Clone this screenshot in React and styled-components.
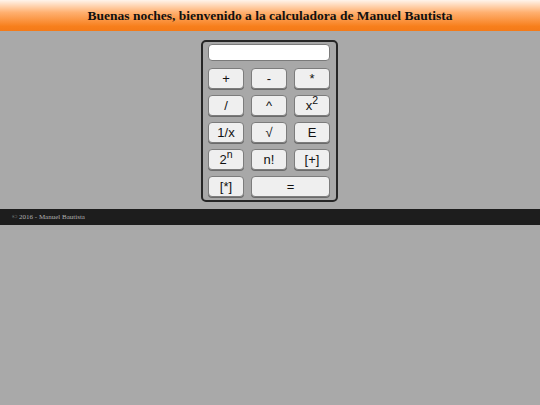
import React from 'react';
import styled, { createGlobalStyle } from 'styled-components';

const GlobalStyle = createGlobalStyle`
  html, body {
    margin: 0;
    padding: 0;
    background: #a9a9a9;
    height: 100%;
  }
  body {
    font-family: "Liberation Serif", serif;
  }
`;

const Header = styled.header`
  height: 31px;
  display: flex;
  align-items: center;
  justify-content: center;
  background: linear-gradient(to bottom, #fff4ec 0%, #ffb070 40%, #f77f1c 85%, #f47a18 100%);
  h1 {
    margin: 0;
    font-size: 13.5px;
    font-weight: bold;
    color: #111;
  }
`;

const Main = styled.main`
  display: flex;
  justify-content: center;
  padding: 9px 1px 7px 0;
`;

const Calculator = styled.div`
  border: 2px solid #262626;
  border-radius: 5px;
  background: #a8a8a8;
  padding: 2px 6px 3px 5px;
  width: 122px;
`;

const Display = styled.input`
  display: block;
  width: 122px;
  height: 17px;
  box-sizing: border-box;
  border: 1px solid #7a7a7a;
  border-radius: 4px;
  background: #fff;
  margin: 0 0 7px;
  padding: 0 4px;
  font-family: "Liberation Sans", sans-serif;
  font-size: 12px;
  outline: none;
`;

const Keys = styled.div`
  display: grid;
  grid-template-columns: repeat(3, 36px);
  grid-auto-rows: 21px;
  column-gap: 7px;
  row-gap: 6px;
`;

const Key = styled.button`
  grid-column: span ${(p) => p.$span || 1};
  margin: 0;
  padding: 0;
  border: 1px solid #7c7c7c;
  border-radius: 4px;
  background: #efefef;
  box-shadow: 0 1px 0 #6a6a6a;
  font-family: "Liberation Sans", sans-serif;
  font-size: 13px;
  color: #111;
  line-height: 1;
  cursor: pointer;
  sup {
    font-size: 10.5px;
    line-height: 0;
    vertical-align: 6px;
  }
`;

const Footer = styled.footer`
  height: 16px;
  background: #1d1d1d;
  display: flex;
  align-items: center;
  padding-left: 12px;
  color: #b0b0b0;
  font-size: 7px;
`;

const keys = [
  ['+'], ['-'], ['*'],
  ['/'], ['^'], [<>x<sup>2</sup></>],
  ['1/x'], ['√'], ['E'],
  [<>2<sup>n</sup></>], ['n!'], ['[+]'],
  ['[*]'], ['=', 2],
];

export default function App() {
  return (
    <>
      <GlobalStyle />
      <Header>
        <h1>Buenas noches, bienvenido a la calculadora de Manuel Bautista</h1>
      </Header>
      <Main>
        <Calculator>
          <Display type="text" readOnly />
          <Keys>
            {keys.map(([label, span], i) => (
              <Key key={i} $span={span}>{label}</Key>
            ))}
          </Keys>
        </Calculator>
      </Main>
      <Footer>© 2016 - Manuel Bautista</Footer>
    </>
  );
}
